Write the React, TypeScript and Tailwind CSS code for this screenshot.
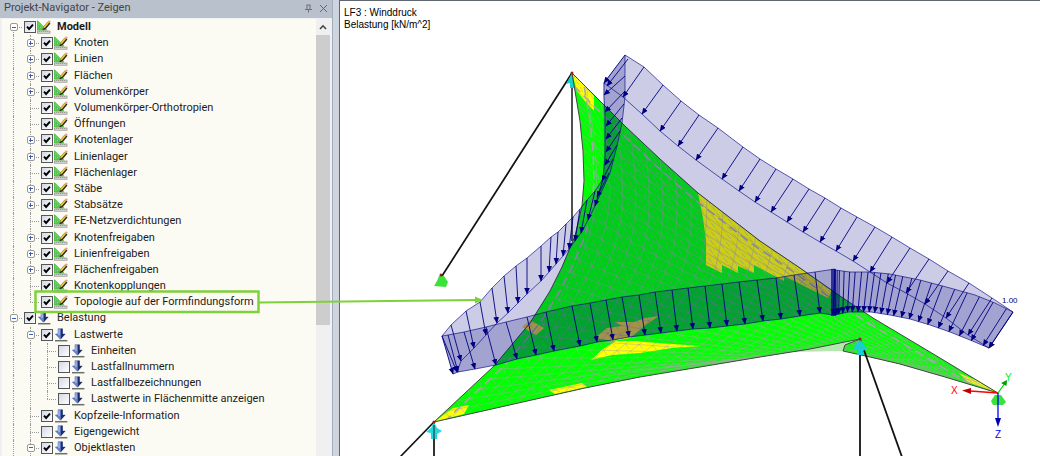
import React, { useState } from 'react';

type IconKind = 'model' | 'load';

interface TreeRow {
  label: string;
  level: number;
  icon: IconKind;
  checked: boolean;
  expand?: 'plus' | 'minus';
  last?: boolean;
}

const model = (label: string, expandable = true, last = false): TreeRow => ({
  label,
  level: 1,
  icon: 'model',
  checked: true,
  expand: expandable ? 'plus' : undefined,
  last,
});

const load = (label: string, level: number, checked: boolean, expand?: 'plus' | 'minus', last = false): TreeRow => ({
  label,
  level,
  icon: 'load',
  checked,
  expand,
  last,
});

const rows: TreeRow[] = [
  { label: 'Modell', level: 0, icon: 'model', checked: true, expand: 'minus' },
  model('Knoten'),
  model('Linien'),
  model('Flächen'),
  model('Volumenkörper'),
  model('Volumenkörper-Orthotropien', false),
  model('Öffnungen', false),
  model('Knotenlager'),
  model('Linienlager'),
  model('Flächenlager', false),
  model('Stäbe'),
  model('Stabsätze'),
  model('FE-Netzverdichtungen', false),
  model('Knotenfreigaben'),
  model('Linienfreigaben'),
  model('Flächenfreigaben'),
  model('Knotenkopplungen', false),
  model('Topologie auf der Formfindungsform', false, true),
  load('Belastung', 0, true, 'minus'),
  load('Lastwerte', 1, true, 'minus'),
  load('Einheiten', 2, false),
  load('Lastfallnummern', 2, false),
  load('Lastfallbezeichnungen', 2, false),
  load('Lastwerte in Flächenmitte anzeigen', 2, false, undefined, true),
  load('Kopfzeile-Information', 1, true),
  load('Eigengewicht', 1, false),
  load('Objektlasten', 1, true, 'minus'),
];

const ModelIcon = () => (
  <svg viewBox="0 0 14 14" className="h-3.5 w-3.5 shrink-0" aria-hidden="true">
    <path d="M0.5 0.8 L0.5 10 L9.8 10 Z" fill="#5fd85a" stroke="#43b041" strokeWidth="0.8" />
    <path d="M2.4 5.6 L2.4 8 L4.8 8 Z" fill="#fbfbf3" stroke="#2f8f2d" strokeWidth="0.6" />
    <path d="M5.6 9.6 L6.8 6.4 L11 1.6 L12.8 3 L8.6 8.2 Z" fill="#f6cd1e" stroke="#6b5a18" strokeWidth="0.5" />
    <path d="M5.8 9.6 L8.6 8.2 L12.9 3" stroke="#2a2a2a" strokeWidth="1.4" fill="none" />
    <path d="M11 1.6 L12.1 0.2 L13.9 1.6 L12.9 3 Z" fill="#e3a0ac" />
    <rect x="0.6" y="11" width="12.4" height="2.2" fill="#dcdcd6" stroke="#8b8b86" strokeWidth="0.7" />
    <path d="M2.500 11v1M4.500 11v1M6.500 11v1M8.500 11v1M10.500 11v1" stroke="#777" strokeWidth="0.5" />
  </svg>
);

const LoadIcon = () => (
  <svg viewBox="0 0 14 14" className="h-3.5 w-3.5 shrink-0" aria-hidden="true">
    <path d="M4 0.8 H8.4 V6 H11.2 L6.4 11.2 L1.4 6 H4 Z" fill="#6685d6" stroke="#3a4f96" strokeWidth="0.5" />
    <path d="M6.8 0.8 H8.6 V6 H11.2 L6.8 11 Z" fill="#1f2c60" />
    <path d="M4.4 1.2 H5.6 V7 H4.4 Z" fill="#b3c5f4" />
    <path d="M1 12.700 H13.4" stroke="#6e6e6e" strokeWidth="1.5" />
  </svg>
);

interface GuideProps {
  vertical: 'none' | 'full' | 'upper' | 'lower';
  branch: boolean;
  expand?: 'plus' | 'minus';
  label: string;
}

const Guide: React.FC<GuideProps> = ({ vertical, branch, expand, label }) => (
  <span className="relative flex w-[17px] shrink-0 items-center justify-center self-stretch">
    {vertical === 'full' && <span className="absolute inset-y-0 left-2 border-l border-dotted border-[#999]" />}
    {vertical === 'upper' && <span className="absolute top-0 bottom-1/2 left-2 border-l border-dotted border-[#999]" />}
    {vertical === 'lower' && <span className="absolute top-1/2 bottom-0 left-2 border-l border-dotted border-[#999]" />}
    {branch && <span className="absolute top-1/2 right-0 left-2 border-t border-dotted border-[#999]" />}
    {expand && (
      <button
        type="button"
        aria-label={label}
        className="relative flex h-2 w-2 items-center justify-center rounded-xs border border-[#999] bg-white"
      >
        <span className="absolute h-px w-1 bg-[#3c5fb4]" />
        {expand === 'plus' && <span className="absolute h-1 w-px bg-[#3c5fb4]" />}
      </button>
    )}
  </span>
);

const TreeItem: React.FC<{ row: TreeRow; index: number }> = ({ row, index }) => {
  const [checked, setChecked] = useState(row.checked);

  const guideFor = (col: number): GuideProps['vertical'] => {
    if (col < row.level) return 'full';
    if (index === 0) return 'lower';
    return row.last ? 'upper' : 'full';
  };

  return (
    <li className="flex min-h-4 flex-1 items-center">
      {Array.from({ length: row.level + 1 }, (_, col) => (
        <Guide
          key={col}
          vertical={guideFor(col)}
          branch={col === row.level}
          expand={col === row.level ? row.expand : undefined}
          label={row.label}
        />
      ))}
      <label className="flex items-center whitespace-nowrap">
        <span className="relative ml-0.5 flex h-3 w-3 shrink-0">
          <input
            type="checkbox"
            checked={checked}
            onChange={(e) => setChecked(e.target.checked)}
            className="h-3 w-3 appearance-none border border-[#555] bg-linear-to-br from-[#d3d9e6] to-white"
          />
          {checked && (
            <svg viewBox="0 0 12 12" className="pointer-events-none absolute inset-0" aria-hidden="true">
              <path d="M3 5.6 L5.1 8 L9 3.6" fill="none" stroke="#000" strokeWidth="1.9" />
            </svg>
          )}
        </span>
        <span className="ml-px flex">{row.icon === 'model' ? <ModelIcon /> : <LoadIcon />}</span>
        <span className={`ml-1.5 ${index === 0 ? 'font-bold' : ''}`}>{row.label}</span>
      </label>
    </li>
  );
};

const Navigator = () => (
  <aside className="flex min-h-screen w-[333px] shrink-0 flex-col border-r border-[#a3acba] bg-[#eef0f4]">
    <header className="flex h-[18px] items-center justify-between bg-[#b9c1cc] pr-1 pb-0.5 pl-1 text-[#444]">
      <h1>Projekt-Navigator - Zeigen</h1>
      <div className="flex items-center gap-1.5">
        <button type="button" aria-label="Anheften">
          <svg viewBox="0 0 9 9" className="h-[9px] w-[9px]">
            <path d="M2.500 1 H6.500 M3 1 V5 M6 1 V5 M1 5.500 H8 M4.500 5.500 V8.500" stroke="#666" strokeWidth="0.9" fill="none" />
          </svg>
        </button>
        <button type="button" aria-label="Schließen">
          <svg viewBox="0 0 9 9" className="h-[9px] w-[9px]">
            <path d="M1 1 L8 8 M8 1 L1 8" stroke="#666" strokeWidth="1" />
          </svg>
        </button>
      </div>
    </header>
    <div className="mx-0.5 mt-px flex flex-1 bg-[#fcfbf3]">
      <ul className="flex flex-1 flex-col pb-px pl-[3px]">
        {rows.map((row, i) => (
          <TreeItem key={row.label} row={row} index={i} />
        ))}
      </ul>
      <div className="flex w-3.5 flex-col bg-[#f0f0f0]">
        <button type="button" aria-label="Nach oben" className="flex h-4 items-center justify-center">
          <svg viewBox="0 0 8 6" className="h-1.5 w-2">
            <path d="M1 5 L4 1.8 L7 5" stroke="#444" strokeWidth="1.6" fill="none" />
          </svg>
        </button>
        <div className="h-[290px] bg-[#cdcdcd]" />
      </div>
    </div>
  </aside>
);

type Pt = [number, number];

const leftEdge: Pt[] = [
  [572, 72], [580, 120], [583, 150], [584, 180], [582, 205], [575, 235], [562, 266], [550, 290],
  [530, 322], [494, 365], [434, 421],
];
const rightEdge: Pt[] = [
  [572, 72], [625, 125], [660, 158], [698, 192], [760, 240], [800, 267], [840, 295], [873, 317],
  [930, 351], [998, 392],
];
const bottomEdge: Pt[] = [
  [434, 421], [585, 387], [640, 376], [700, 366], [760, 356], [810, 348], [860, 338],
];
const frontEdge: Pt[] = [[998, 392], [945, 376], [900, 363], [870, 356], [843, 350], [845, 344], [860, 338]];

const upperTop: Pt[] = [
  [625, 54], [644, 66], [663, 84], [681, 100], [699, 114], [718, 127], [743, 146], [760, 158], [776, 168],
  [793, 178], [809, 188], [825, 197], [841, 207], [857, 216], [875, 226], [892, 236], [910, 247], [929, 258],
  [948, 270], [969, 282], [992, 297], [1013, 311],
];
const upperTips: Pt[] = [
  [604, 82], [623, 96], [642, 113], [660, 130], [678, 145], [696, 159], [722, 178], [739, 190], [755, 201],
  [771, 211], [787, 221], [803, 231], [820, 241], [836, 250], [853, 260], [870, 271], [887, 282], [906, 292],
  [925, 303], [946, 317], [968, 334], [989, 347],
];
const leftTop: Pt[] = [
  [442, 335], [451, 324], [466, 310], [480, 301], [492, 287], [504, 275], [516, 265], [527, 257], [541, 245],
  [551, 236], [558, 231], [566, 223], [573, 216], [580, 208], [587, 199], [595, 190], [603, 178],
];
const leftTips: Pt[] = [
  [457, 371], [461, 360], [474, 347], [486, 334], [497, 322], [508, 312], [518, 302], [527, 293], [541, 280],
  [549, 271], [556, 263], [563, 255], [569, 248], [575, 240], [581, 232], [588, 219], [595, 205],
];
const lowerTop: Pt[] = [
  [442, 335], [448, 334], [464, 331], [486, 326], [506, 321], [527, 316], [546, 311], [572, 305], [590, 302],
  [606, 299], [622, 296], [639, 294], [655, 291], [672, 289], [688, 287], [705, 285], [722, 283], [739, 281],
  [757, 279], [776, 277], [794, 274], [815, 271], [835, 268],
];
const lowerTips: Pt[] = [
  [453, 373], [458, 371], [475, 368], [496, 364], [517, 358], [536, 354], [554, 350], [580, 345], [597, 341],
  [613, 339], [629, 336], [645, 334], [661, 332], [677, 330], [693, 328], [710, 327], [727, 325], [745, 323],
  [763, 320], [781, 318], [800, 315], [820, 312], [833, 314],
];
const frontTop: Pt[] = [
  [835, 269], [850, 271], [870, 271], [890, 273], [920, 279], [950, 287], [975, 294], [995, 302], [1013, 311],
];
const frontTips: Pt[] = [
  [835, 314], [848, 311], [871, 311], [890, 314], [910, 318], [930, 324], [950, 331], [970, 339], [989, 347],
];
const shaftOuter: Pt[] = [[625, 54], [625, 78], [625, 96], [622, 122], [617, 145], [610, 172], [595, 205]];
const shaftInner: Pt[] = [[604, 82], [604, 96], [605, 112], [605, 126], [605, 140], [605, 155], [603, 178]];

const str = (pts: Pt[]) => pts.map((p) => p.join(',')).join(' ');

// Point at parameter t (0..1, by arc length) of a polyline
const at = (pts: Pt[], t: number): Pt => {
  const lens = pts.slice(1).map((p, i) => Math.hypot(p[0] - pts[i][0], p[1] - pts[i][1]));
  let rest = t * lens.reduce((a, b) => a + b, 0);
  for (let i = 0; i < lens.length; i++) {
    if (rest <= lens[i] || i === lens.length - 1) {
      const f = Math.min(1, rest / lens[i]);
      return [pts[i][0] + (pts[i + 1][0] - pts[i][0]) * f, pts[i][1] + (pts[i + 1][1] - pts[i][1]) * f];
    }
    rest -= lens[i];
  }
  return pts[0];
};

// Coons patch over the four membrane edges
const surface = (u: number, v: number): Pt => {
  const l = at(leftEdge, v);
  const f = at(frontEdge, v);
  const r = at(rightEdge, u);
  const b = at(bottomEdge, u);
  const apex: Pt = [572, 72];
  const right: Pt = [998, 392];
  const left: Pt = [434, 421];
  const mast: Pt = [860, 338];
  const mix = (k: 0 | 1) =>
    (1 - u) * l[k] + u * f[k] + (1 - v) * r[k] + v * b[k] -
    ((1 - u) * (1 - v) * apex[k] + u * (1 - v) * right[k] + (1 - u) * v * left[k] + u * v * mast[k]);
  return [Math.round(mix(0) * 10) / 10, Math.round(mix(1) * 10) / 10];
};

const N = 26;
const steps = Array.from({ length: N + 1 }, (_, i) => i / N);
const meshLines: Pt[][] = [
  ...steps.map((u) => steps.map((v) => surface(u, v))),
  ...steps.map((v) => steps.map((u) => surface(u, v))),
];
const diagonals: Pt[][] = steps
  .slice(0, -1)
  .flatMap((u) => steps.slice(0, -1).map((v) => [surface(u, v), surface(u + 1 / N, v + 1 / N)]));

const outline: Pt[] = [
  ...leftEdge,
  ...bottomEdge.slice(1),
  ...[...frontEdge].reverse().slice(1),
  ...[...rightEdge].reverse().slice(1),
];
const loadArea: Pt[] = [
  ...upperTop,
  ...[...frontTips].reverse(),
  ...[...lowerTips].reverse(),
  ...leftTop,
  [604, 150],
  [603, 82],
];

const Arrows: React.FC<{ from: Pt[]; to: Pt[] }> = ({ from, to }) => (
  <g stroke="#000080" strokeWidth="0.9">
    {from.map((p, i) => (
      <line key={i} x1={p[0]} y1={p[1]} x2={to[i][0]} y2={to[i][1]} markerEnd="url(#head)" />
    ))}
  </g>
);

const frontSteps = [
  0, 0.012, 0.024, 0.05, 0.08, 0.11, 0.145, 0.18, 0.215, 0.25, 0.29, 0.33, 0.37, 0.42, 0.47, 0.53, 0.59,
  0.66, 0.73, 0.8, 0.88, 0.96, 1,
];

const Scene = () => (
  <svg viewBox="340 0 700 456" preserveAspectRatio="xMinYMin meet" className="block w-full" role="img" aria-label="Membranmodell">
    <defs>
      <marker id="head" markerWidth="8" markerHeight="8" refX="6" refY="3.5" orient="auto" markerUnits="userSpaceOnUse">
        <path d="M0 0.7 L6.5 3.5 L0 6.3 Z" fill="#000080" />
      </marker>
      <clipPath id="membrane">
        <polygon points={str(outline)} />
      </clipPath>
    </defs>

    {/* supports */}
    <g stroke="#111" strokeWidth="1.7">
      <line x1="572" y1="72" x2="442" y2="275" />
      <line x1="572" y1="76" x2="572" y2="240" stroke="#333" />
      <line x1="434" y1="421" x2="400" y2="456" />
      <line x1="434" y1="421" x2="434" y2="456" />
    </g>
    <path d="M439 275 H444 L448 281 L446 286 L434 285 L437 280 Z" fill="#3ae23a" />
    <circle cx="441" cy="274" r="1.5" fill="#a01818" />
    <path d="M572 72 L566 83 L570 82 V87 H575 V82 L577 84 Z" fill="#19cdd0" />

    {/* membrane */}
    <path d="M700 366 L760 356 L855 340 L843 350 L790 351 Z" fill="#b4e8ae" />
    <polygon points={str(outline)} fill="#00ff00" />
    <g fill="#ffff00">
      <path d="M572 72 L584 84 L594 95 V110 L584 99 L577 90 Z" />
      <path d="M698 192 L760 240 L800 267 L832 290 L828 297 L784 275 V280 L754 264 V272 L738 265 V272 L722 264 V272 L706 264 L706 240 L703 217 Z" />
      <path d="M522 326 L530 319 L544 327 L536 334 Z" fill="#ffe628" />
      <path d="M595 337 L607 327 L622 325 L615 321 L634 321 L645 317 L659 315 L647 323 L630 337 L613 340 Z" fill="#ffe628" />
      <path d="M591 359 L603 348 L616 340 H634 L657 342 L701 345 L672 347 L640 352 L612 354 Z" />
      <path d="M549 389 L582 382 L587 386 L555 393 Z" />
      <path d="M434 421 L453 407 L469 404 L464 413 Z" />
      <path d="M959 372 L978 380 L998 392 L968 381 Z" />
    </g>
    <g clipPath="url(#membrane)" fill="none" stroke="#a8a8a8">
      {meshLines.map((line, i) => (
        <polyline key={i} points={str(line)} strokeWidth="0.8" strokeOpacity="0.6" />
      ))}
      {diagonals.map((line, i) => (
        <polyline key={i} points={str(line)} strokeWidth="0.8" strokeOpacity="0.6" strokeDasharray="6 2" />
      ))}
      <polyline points={str(rightEdge.map(([x, y]) => [x - 8, y + 3]))} strokeWidth="1.5" strokeDasharray="9 5" />
      <polyline points={str(leftEdge.map(([x, y]) => [x + 10, y]))} strokeWidth="1.5" strokeDasharray="9 5" />
    </g>
    <polygon points={str(outline)} fill="none" stroke="#3d4a3d" strokeWidth="1" />

    {/* wind load */}
    <g fill="#000080" fillOpacity="0.2">
      <polygon points={str(loadArea)} />
      <polygon points={str([...shaftOuter, ...[...shaftInner].reverse()])} />
      <polygon points={str([...lowerTop, ...[...lowerTips].reverse()])} />
      <polygon points={str([...frontTop, ...[...frontTips].reverse()])} />
    </g>
    <g fill="none" stroke="#000080" strokeWidth="0.9" strokeOpacity="0.7">
      {[upperTop, upperTips, leftTop, leftTips, lowerTop, lowerTips, frontTop, frontTips, shaftOuter, shaftInner].map(
        (line, i) => (
          <polyline key={i} points={str(line)} />
        ),
      )}
    </g>
    <Arrows from={upperTop} to={upperTips} />
    <Arrows from={leftTop} to={leftTips} />
    <Arrows from={lowerTop} to={lowerTips} />
    <Arrows from={frontSteps.map((t) => at(frontTop, t))} to={frontSteps.map((t) => at(frontTips, t))} />
    <Arrows
      from={[[628, 58], [625, 75], [625, 90], [624, 103], [622, 117], [620, 130], [617, 144], [613, 158], [609, 172]]}
      to={[[607, 85], [604, 94], [605, 111], [606, 125], [606, 138], [606, 151], [605, 164], [602, 180], [597, 196]]}
    />
    <path d="M831 268 H836 V315 H831 Z" fill="#000080" fillOpacity="0.7" />

    {/* front mast and lower nodes */}
    <g stroke="#111" strokeWidth="1.8">
      <line x1="860" y1="338" x2="860" y2="456" />
      <line x1="860" y1="338" x2="902" y2="456" />
    </g>
    <path d="M860 338 L852 349 L857 348 V354 H863 V350 L867 348 Z" fill="#19cdd0" />
    <path d="M434 421 L431 427 L426 431 L431 432 V438 H437 V433 L442 430 L437 427 Z" fill="#19dbe0" />
    <path d="M434 424 V456" stroke="#333" strokeWidth="1.2" />
    <circle cx="434" cy="421" r="1.5" fill="#a01818" />
    <circle cx="860" cy="338" r="1.5" fill="#a01818" />
    <circle cx="572" cy="72" r="1.5" fill="#a01818" />

    {/* axes */}
    <path d="M995 394 H1001 L1006 401 L1003 404 H993 L991 400 Z" fill="#3ae23a" />
    <path d="M998 392 L970 390" stroke="#ff0000" strokeWidth="1.3" />
    <path d="M962 389.500 L971 387 V393 Z" fill="#c00000" />
    <path d="M998 392 L1005 382" stroke="#00dd00" strokeWidth="1.3" />
    <path d="M1007 379 L1006.500 385 L1001 382 Z" fill="#00a000" />
    <path d="M998 392 V418" stroke="#0000ff" strokeWidth="1.3" />
    <path d="M998 426 L995 417 H1001 Z" fill="#0000b0" />
    <g className="text-[10px]">
      <text x="951" y="393" fill="#ff0000">X</text>
      <text x="1005" y="380" fill="#00ee00">Y</text>
      <text x="995" y="437" fill="#0000ff">Z</text>
      <text x="1002" y="302" fill="#000080" className="text-[8px]">1.00</text>
    </g>
  </svg>
);

export default function App() {
  return (
    <div className="relative flex min-h-screen overflow-hidden bg-white font-[Roboto,sans-serif] text-[11px] leading-4 text-[#1c1c1c]">
      <Navigator />
      <div className="w-[7px] shrink-0 border-r border-[#5f6670] bg-[#cfd5df]" />
      <main className="relative min-w-0 flex-1 border-t border-[#5f6670] font-['Liberation_Sans',sans-serif] text-black">
        <div className="absolute top-1.5 left-1 text-[10px] leading-3">
          <p>LF3 : Winddruck</p>
          <p>Belastung [kN/m^2]</p>
        </div>
        <Scene />
      </main>

      {/* callout from the tree entry to the load surface */}
      <svg viewBox="0 0 1040 456" className="pointer-events-none absolute top-0 left-0 w-full" aria-hidden="true">
        <rect x="35.500" y="291.500" width="223" height="20.500" fill="none" stroke="#7fd13b" strokeWidth="2.500" />
        <path d="M259 302.500 L476 300" stroke="#7fd13b" strokeWidth="2" />
        <path d="M475 296.500 L483 300 L475 303.500 Z" fill="#7fd13b" />
      </svg>
    </div>
  );
}
